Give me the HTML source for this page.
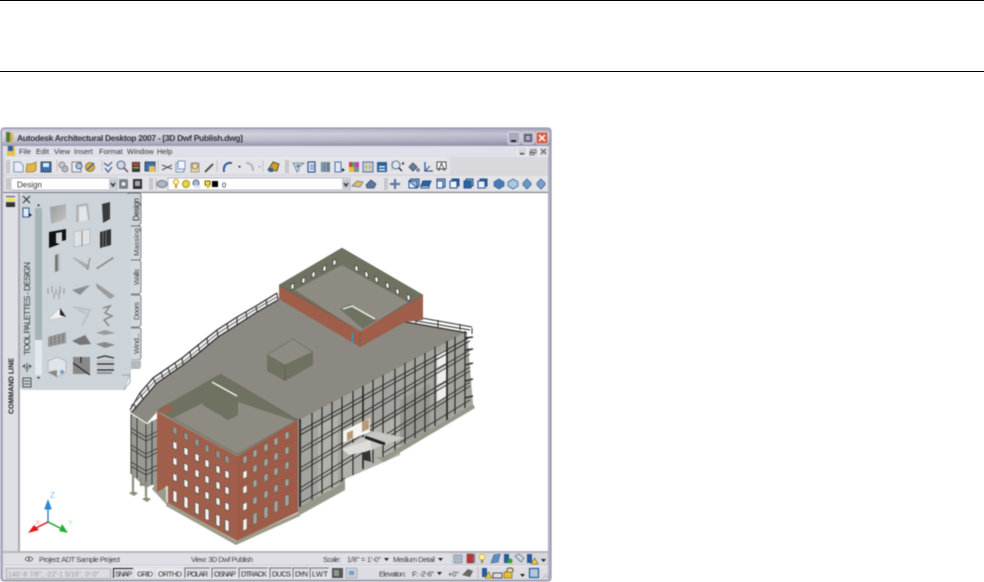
<!DOCTYPE html>
<html><head><meta charset="utf-8"><title>Autodesk Architectural Desktop 2007</title>
<style>
html,body{margin:0;padding:0;background:#fff;width:984px;height:582px;overflow:hidden}
svg{display:block;position:absolute;left:0;top:0}
text{font-family:"Liberation Sans",sans-serif;fill:#333}
.m{font-size:7.5px;fill:#333}
.s{font-size:7.5px;fill:#444}
.b{font-size:7.5px;fill:#333}
.tab{font-size:7.5px;fill:#444}
#win{filter:blur(.4px)}
</style></head><body>
<svg width="984" height="582" viewBox="0 0 984 582" xmlns="http://www.w3.org/2000/svg">
<defs>
<linearGradient id="tb" x1="0" y1="0" x2="0" y2="1"><stop offset="0" stop-color="#b8b8ca"/><stop offset=".3" stop-color="#d6d6e2"/><stop offset=".7" stop-color="#bcbccc"/><stop offset="1" stop-color="#9494ac"/></linearGradient>
<linearGradient id="tbr" x1="0" y1="0" x2="1" y2="0"><stop offset="0" stop-color="#fff" stop-opacity=".15"/><stop offset="1" stop-color="#6a6a8a" stop-opacity=".22"/></linearGradient>
<linearGradient id="w" x1="0" y1="0" x2="1" y2="1"><stop offset="0" stop-color="#9b9b9b"/><stop offset="1" stop-color="#c4c4c4"/></linearGradient>
</defs>
<rect width="984" height="582" fill="#fff"/>
<rect x="0" y="0" width="984" height="1" fill="#000"/>
<rect x="0" y="71" width="984" height="1" fill="#000"/>
<g id="win">
<!-- window frame -->
<rect x="1" y="128" width="550" height="453" rx="3" fill="#b0b0c2" stroke="#8c8ca2" stroke-width="1"/>
<rect x="2" y="129" width="548" height="16" fill="url(#tb)"/>
<rect x="2" y="129" width="548" height="16" fill="url(#tbr)"/>
<rect x="3" y="145" width="545" height="47" fill="#d8d8dd"/>
<rect x="3" y="145" width="545" height="12" fill="#dfe1ea"/>
<rect x="3" y="145" width="545" height="1" fill="#9a9ab0"/>
<rect x="3" y="192" width="545" height="1.4" fill="#77777f"/>

<!-- title -->
<rect x="6" y="132" width="4" height="10" fill="#5a7a3a"/><rect x="10" y="133" width="3" height="9" fill="#d4b048"/>
<text x="17" y="141" font-size="8.5" font-weight="bold" fill="#33333c" style="fill:#33333c" textLength="226" lengthAdjust="spacing">Autodesk Architectural Desktop 2007 - [3D Dwf Publish.dwg]</text>
<!-- window buttons -->
<rect x="508" y="132" width="12" height="12" rx="2" fill="#a9a9c2" stroke="#eee" stroke-width=".8"/><rect x="511" y="140" width="5" height="2" fill="#222"/>
<rect x="522" y="132" width="12" height="12" rx="2" fill="#a9a9c2" stroke="#eee" stroke-width=".8"/><rect x="525" y="135" width="6" height="6" fill="none" stroke="#333" stroke-width="1"/>
<rect x="536" y="132" width="12" height="12" rx="2" fill="#cf6148" stroke="#eee" stroke-width=".8"/><path d="M539 135l6 6M545 135l-6 6" stroke="#fff" stroke-width="1.5"/>

<!-- menu -->
<rect x="7" y="146" width="8" height="10" fill="#e8c050"/><rect x="8" y="146" width="5" height="5" fill="#2b5fa5"/>
<text class="m" x="19" y="154">File</text><text class="m" x="36" y="154">Edit</text><text class="m" x="54" y="154">View</text><text class="m" x="74" y="154">Insert</text><text class="m" x="99" y="154">Format</text><text class="m" x="127" y="154">Window</text><text class="m" x="157" y="154">Help</text>
<g fill="#d5d6dc" stroke="#f2f2f5" stroke-width=".7"><rect x="518" y="147" width="9" height="9"/><rect x="528" y="147" width="10" height="9"/><rect x="539" y="147" width="9" height="9"/></g>
<rect x="520" y="153" width="4" height="1.4" fill="#444"/><path d="M531 150h5v3h-5zM530 152h4v3h-4z" fill="#ddd" stroke="#555" stroke-width=".7"/><path d="M541 149l5 5M546 149l-5 5" stroke="#555" stroke-width="1"/>

<!-- toolbars -->
<rect x="5" y="158" width="445" height="16" fill="#e4e4e8"/>
<rect x="5" y="157.500" width="440" height=".6" fill="#f5f5f7"/>
<rect x="5" y="176" width="543" height="15" fill="#e4e4e8"/>
<path d="M7 160v13M9 160v13M7 178v12M9 178v12M150 178v12M152 178v12M286 160v13M288 160v13M385 178v12M387 178v12" stroke="#aaaab0" stroke-width="1"/>
<path d="M57 160v12M102 160v12M158 160v12M217 160v12M263 160v12M392 160v12M487 179v10M156 178v12" stroke="#bbb" stroke-width=".8"/>
<!-- row 1 icons -->
<g stroke-width=".8">
<path d="M14 162h6l3 3v7h-9z" fill="#e8eef8" stroke="#5a7fb0"/>
<path d="M27 164h5l4-2v8l-3 2h-7z" fill="#e0b850" stroke="#a07820"/>
<rect x="41" y="162" width="10" height="10" fill="#3d70b0" stroke="#234"/><rect x="43" y="163" width="6" height="4" fill="#dfe8f5"/>
<circle cx="62" cy="165" r="3" fill="#c8c8d0" stroke="#777"/><circle cx="65" cy="169" r="3" fill="#b8b8c0" stroke="#777"/>
<rect x="72" y="162" width="9" height="10" fill="#e8e8f0" stroke="#667"/><circle cx="79" cy="166" r="3" fill="#a8c8e8" stroke="#345"/>
<circle cx="90" cy="167" r="4.500" fill="#d8b040" stroke="#806018"/><path d="M87 170l7-7" stroke="#3a6aa0" stroke-width="1.500"/>
<path d="M104 163l4 3 4-4M105 168l3 4 4-5" fill="none" stroke="#3a5a98" stroke-width="1.200"/>
<circle cx="121" cy="165" r="4" fill="#c8d8e8" stroke="#446"/><path d="M124 168l4 4" stroke="#555" stroke-width="1.500"/>
<rect x="132" y="162" width="8" height="10" fill="#383838"/><rect x="133" y="163" width="6" height="3" fill="#c04040"/><rect x="133" y="167" width="6" height="1.500" fill="#80b060"/>
<rect x="145" y="162" width="10" height="9" fill="#3d70b0" stroke="#234"/><rect x="149" y="166" width="6" height="6" fill="#e0c060"/>
<path d="M162 165l10 4M162 170l10-5" stroke="#555" stroke-width="1.200"/>
<rect x="176" y="163" width="8" height="9" fill="#e8eef8" stroke="#5a7fb0"/><rect x="178" y="161" width="7" height="8" fill="#f4f6fa" stroke="#5a7fb0"/>
<rect x="191" y="163" width="8" height="9" fill="#f0d890" stroke="#7a8a9a"/><circle cx="195" cy="166" r="3" fill="none" stroke="#668"/>
<path d="M205 172l8-8" stroke="#555" stroke-width="2"/>
<path d="M232 163c-6-1-9 3-8 9" fill="none" stroke="#2a5a9a" stroke-width="2"/><path d="M238 166l3 0-1.500 2z" fill="#222"/>
<path d="M246 163c5 0 7 3 7 8" fill="none" stroke="#b0b4b8" stroke-width="2"/><path d="M258 166l3 0-1.500 2z" fill="#aaa"/>
<path d="M268 170l5-8 6 2-2 7z" fill="#c8a030" stroke="#403818"/><rect x="269" y="168" width="4" height="4" fill="#3060a0"/>
<path d="M293 163h11l-5 4v3l-2 2-1-3z" fill="#c8d4e0" stroke="#667a8a"/><circle cx="298" cy="166" r="1.500" fill="#6080a0"/>
<rect x="308" y="162" width="7" height="10" fill="#e8eef8" stroke="#2a5090" stroke-width="1.200"/><path d="M310 165h4M310 167h4M310 169h4" stroke="#2a5090"/>
<rect x="321" y="162" width="9" height="10" fill="#6a7f92"/><path d="M323 162v10M326 162v10" stroke="#c0ccd8" stroke-width=".6"/>
<rect x="335" y="162" width="6" height="10" fill="#dfe8f5" stroke="#2a5090"/><path d="M342 168l3 2-3 2z" fill="#222"/>
<rect x="349" y="162" width="3" height="5" fill="#d04040"/><rect x="352" y="162" width="3" height="5" fill="#60a050"/><rect x="355" y="162" width="4" height="5" fill="#c040c0"/><rect x="349" y="167" width="5" height="5" fill="#e0c040"/><rect x="354" y="167" width="5" height="5" fill="#889"/>
<rect x="363" y="162" width="10" height="10" fill="#c8d8e8" stroke="#2a5090"/><path d="M366 162v10M370 162v10M363 167h10" stroke="#d0a040"/>
<rect x="377" y="162" width="10" height="10" fill="#2a6098"/><rect x="379" y="166" width="6" height="1.500" fill="#e8eef8"/><rect x="379" y="169" width="6" height="1.500" fill="#e8eef8"/>
<circle cx="396" cy="165" r="4" fill="#dfe8f0" stroke="#456"/><path d="M399 168l3 3" stroke="#222" stroke-width="1.300"/><path d="M403 162v3M401.500 163.500h3" stroke="#222"/>
<path d="M413 163l4 4-4 4-4-4z" fill="#6a8098" stroke="#345"/><circle cx="418" cy="170" r="2" fill="#789"/>
<path d="M425 162v9h8" fill="none" stroke="#2a5a9a" stroke-width="1.300"/><path d="M425 171l5-5" stroke="#222"/>
<rect x="437" y="162" width="9" height="7" fill="#fff" stroke="#222"/><path d="M441.500 163l-3 8M441.500 163l3 8" stroke="#222" stroke-width=".8"/>
</g>
<!-- combos -->
<rect x="11" y="178" width="106" height="12" fill="#fff" stroke="#a8a8b4" stroke-width=".8"/>
<text x="17" y="187.500" font-size="8" fill="#333" style="fill:#333">Design</text>
<rect x="109" y="179" width="8" height="10" fill="#c4c8d4"/><path d="M111 183l2 3 2-3" fill="none" stroke="#222" stroke-width="1.200"/>
<rect x="119" y="179" width="9" height="10" fill="#8090a0"/><circle cx="123.500" cy="184" r="3" fill="#e0e0e8" stroke="#555"/>
<rect x="133" y="179" width="9" height="10" fill="#303038"/><rect x="135" y="181" width="5" height="5" fill="#aaa"/>
<ellipse cx="162" cy="184" rx="5" ry="3.500" fill="#a8b8c8" stroke="#778"/>
<rect x="168" y="178" width="182" height="12" fill="#fff" stroke="#a8a8b4" stroke-width=".8"/>
<rect x="342" y="179" width="8" height="10" fill="#c4c8d4"/><path d="M344 183l2 3 2-3" fill="none" stroke="#222" stroke-width="1.200"/>
<circle cx="176" cy="182" r="2.500" fill="#fff8b0" stroke="#c0a020"/><rect x="175" y="185" width="2" height="3" fill="#b09030"/>
<circle cx="186" cy="184" r="3.500" fill="#e8d840" stroke="#a09020"/>
<circle cx="196" cy="183" r="3" fill="#a0c0d8" stroke="#567"/><rect x="194" y="185" width="6" height="3" fill="#dde"/>
<path d="M205 181h5v4h-5z" fill="#f0e060" stroke="#806000"/><circle cx="208" cy="186" r="2" fill="#d8c030"/>
<rect x="212" y="181" width="6" height="6" fill="#000"/>
<text x="222" y="187.500" font-size="7.500" fill="#222" style="fill:#222">0</text>
<path d="M352 186l5-5 6 1-3 5z" fill="#e0c050" stroke="#5070a0" stroke-width=".7"/>
<path d="M366 185l5-5 5 4-2 4h-7z" fill="#5a78a0" stroke="#345" stroke-width=".7"/>
<path d="M395 179v10M390 184h10" stroke="#5a78a0" stroke-width="2.200"/>
<g fill="#f0f4f8" stroke="#1f4f8c" stroke-width="1">
<path d="M409 181h8v7h-8z"/><path d="M409 181l2-2h8v7l-2 2z" fill="#2a62a0" fill-opacity=".35"/>
<path d="M423 181h8l-2 5h-8z" fill="#2a62a0"/><path d="M421 186h8v2h-8z"/>
<path d="M437 179h8v8h-8z" fill="#aac0da"/><path d="M437 181h6v7h-6z"/>
<path d="M450 181h7v7h-7z"/><path d="M452 179h7v7h-2v-5h-5z" fill="#2a62a0"/>
<path d="M464 181h7v7h-7z" fill="#2a62a0"/><path d="M466 179h7v7h-2v-5h-5z" fill="#8fb0d0"/>
<path d="M478 181h7v7h-7z" fill="#eef"/><path d="M480 179h7v7h-2v-5h-5z" fill="#2a62a0"/>
</g>
<g stroke="#3a6aa0" stroke-width=".8"><path d="M499 179l5 3v4l-5 3-5-3v-4z" fill="#4a7ab0"/><path d="M513 179l5 3v4l-5 3-5-3v-4z" fill="#a8c8e0"/><path d="M527 179l4 4v2l-4 4-4-4v-2z" fill="#6a98c0"/><path d="M541 179l4 4v2l-4 4-4-4v-2z" fill="#7aa0c8"/></g>

<!-- left strip -->
<rect x="3" y="193" width="16" height="359" fill="#dfdfe6"/>
<rect x="18" y="193" width="2" height="359" fill="#a8a8ae"/>
<rect x="6" y="196" width="9" height="11" fill="#3a5a98"/><rect x="6" y="197" width="9" height="5" fill="#f0e070"/><rect x="6" y="203" width="9" height="4" fill="#333"/>
<text transform="translate(13.500 414) rotate(-90)" font-size="7" font-weight="bold" fill="#222" style="fill:#222" textLength="56">COMMAND LINE</text>

<!-- canvas -->
<rect x="20" y="193" width="528" height="358" fill="#fff"/>

<!-- BUILDING -->
<!-- left lower curved facade -->
<path d="M131 414L147 424 158 418V482L146 488 131 474z" fill="#9a9a94"/>
<path d="M131 428L146 437 158 431M131 432L146 441 158 435M131 445L146 454 158 448M131 449L146 458 158 452M131 462L146 471 158 465M131 466L146 475 158 469" fill="none" stroke="#3c3c3a" stroke-width=".9"/>
<path d="M131 414V474M137 418V478M146 424V488M152 421V485" stroke="#3c3c3a" stroke-width="1"/>
<path d="M133 475V491M146 482V497M141 478V486" stroke="#8b8d7c" stroke-width="2.200"/>
<path d="M129 493l4-2 5 2-4 3zM142 499l4-2 5 2-4 3zM139 484l3-1 4 1-3 2zM153 484l4-1 2 3-3 2z" fill="#8b8d7c"/>
<path d="M152 489L167 505 167 490 157 481z" fill="#9b9c8a"/>
<!-- main roof -->
<path d="M130 412L145 396 157 383 183 363 200 351 218 336 237 324 257 311 279 298 360 345 405 321 467 332 298 421 237 456 157 412 147 423z" fill="#8b8981"/>
<!-- railing -->
<path d="M132 411L145 396 157 383 183 365 200 352 218 337 237 325 257 312 278 300L277 293 256 306 237 317 217 330 198 345 182 358 153 378 140 393 130 410z" fill="#f2f2f2"/>
<path d="M130 410L140 393 153 378 182 358 198 345 217 330 237 317 256 306 277 293" fill="none" stroke="#2c2c2c" stroke-width="1.200"/>
<path d="M132 412L145 397 157 383 183 365 200 352 218 337 237 325 257 312 278 300" fill="none" stroke="#2c2c2c" stroke-width="1.200"/>
<path d="M131 406L143 394 155 381 183 362 199 349 217 334 237 321 256 309 277 297" fill="none" stroke="#555" stroke-width=".8"/>
<path d="M134 404l2 5M140 393l3 6M147 385l2 6M153 378l3 6M161 372l2 6M168 368l2 6M175 363l2 6M182 358l1 7M190 352l1 6M198 345l2 7M207 338l1 7M217 330l1 7M227 323l1 7M237 317v8M246 312l1 7M256 306l1 6M266 299l1 7M277 293l1 7" stroke="#2c2c2c" stroke-width="1"/>
<!-- middle roof box -->
<path d="M267 355V371L285 381 313 365V352L285 365z" fill="#6f7161"/>
<path d="M267 355L293 339 313 352 285 365z" fill="#8d8b82" stroke="#6a6b5c" stroke-width=".6"/>
<path d="M285 365V381" stroke="#5f6053"/>
<!-- curtain wall right -->
<path d="M298 421L467 332 473 404 383 457 377 453 345 478 345 484 298 508z" fill="#a4a49e"/>
<path d="M318 425L338 414V494L318 500zM343 445L400 415V455L343 480z" fill="#b2b2ac"/>
<path d="M400 400L430 384V430L400 445z" fill="#989892"/>
<path d="M437 354l9-5v14l-9 5zM437 371l9-5v14l-9 5zM437 388l9-5v14l-9 5z" fill="#eeeeea"/>
<path d="M298 508L345 482 345 490 298 516zM383 457L473 404 475 408 384 462 376 457z" fill="#96978a"/>
<!-- floors -->
<g fill="none" stroke="#333" stroke-width="1">
<path d="M300 431L470 337M300 435L470 341"/>
<path d="M300 449L470 350M300 453L470 354"/>
<path d="M300 468L470 367M300 472L470 371"/>
<path d="M300 488L470 382M300 492L470 386"/>
<path d="M300 503L345 478M383 453L470 400"/>
</g>
<g stroke="#2a2a2a" stroke-width="1.200">
<path d="M300 419V507M312 413V500M322 407V494M332 402V488M342 397V482M353 391V475M363 386V469M373 380V463M383 375V457M395 369V450M405 363V444M415 358V438M425 353V432M435 347V426M447 341V419M455 337V414M465 331V408"/>
</g>
<path d="M300 419V507" stroke="#2e2e2e" stroke-width="2"/>
<path d="M363 386V469M447 341V420" stroke="#222" stroke-width="1.500"/>
<!-- entry -->
<path d="M343 431L370 418V432L343 443z" fill="#f4f4f0"/><path d="M347 433l6-3v8l-6 3zM362 422l7-3v10l-7 3z" fill="#b89a78"/>
<path d="M342 449L374 431 405 438 378 447 370 451 349 455z" fill="#c8c8c4"/>
<path d="M342 449L370 440 372 450 349 455z" fill="#dcdcd8"/>
<path d="M365 437L385 444" stroke="#222" stroke-width="3"/>
<path d="M363 453l7-3 1 12-3-1-5-1z" fill="#333"/>
<!-- right rail -->
<path d="M405 315L472 327M405 322L467 333M405 319L470 330M405 313v9M416 316v7M438 320v7M460 324v6M472 328v6" fill="none" stroke="#2c2c2c" stroke-width="1"/>
<path d="M465 338l8-1M465 350l8-1M465 365l8-2M465 381l8-2M465 398l8-2" stroke="#2c2c2c" stroke-width="1.600"/>

<!-- penthouse -->
<path d="M279 285L360 331 423 295V320L405 322 360 347 279 299z" fill="#9e5e4a"/>
<path d="M279 285L342 248 423 295 360 331z" fill="#6f7161" stroke="#5c5d50" stroke-width=".5"/>
<path d="M295 290L342 265 408 302 360 332z" fill="#8d8b82"/>
<path d="M279 285L360 331V347" fill="none" stroke="#5c5d50" stroke-width=".5"/>
<path fill="#fff" stroke="#3e3e3a" stroke-width=".7" d="M291 285l3-2v5l-3 2zM302 279l3-2v5l-3 2zM312 273l3-2v5l-3 2zM323 267l3-2v5l-3 2zM333 261l3-2v5l-3 2zM355 265l3 2v5l-3-2zM365 271l3 2v5l-3-2zM375 276l3 2v5l-3-2zM386 282l3 2v5l-3-2zM396 288l3 2v5l-3-2zM407 294l3 2v5l-3-2z"/>
<path d="M340 309L350 304 377 320 363 329z" fill="#6f7161"/>
<path d="M343 309L352 306 375 319" fill="none" stroke="#f4f4f2" stroke-width="1.400"/>
<path d="M352.500 333V343" stroke="#22a0d0" stroke-width="1.300"/>

<!-- front block -->
<path d="M157 412L237 456V541L168 503V486L157 492z" fill="#a05f4b"/>
<path d="M237 456L298 420V512L237 541z" fill="#9e5c48"/>
<path d="M157 410L220 374 298 420 237 455z" fill="#6f7161"/>
<path d="M173 418L203 403 228 420 238 415 238 402 295 421 237 454z" fill="#8d8b82"/>
<path d="M203 386L238 403V415L228 420 203 405z" fill="#6f7161"/>
<path d="M212 382L237 396" stroke="#f4f4f2" stroke-width="1.500"/>
<path d="M157 412l13-7 5 3-8 4 3 2z" fill="#a05f4b"/>
<path d="M220 374L298 420" stroke="#5c5d50" stroke-width=".5"/>
<path d="M167 502L236 541 300 512 300 516 236 545 166 506z" fill="#9b9c8a"/>
<path d="M166 486h2v16h-2z" fill="#d8d8d2"/>
<!-- windows left face -->
<path fill="#93958f" stroke="#5a5048" stroke-width=".5" d="M173 426l4 2v7l-4-2zM184 432l4 2v7l-4-2zM195 438l4 2v7l-4-2zM205 444l4 2v7l-4-2zM216 450l4 2v7l-4-2zM225 455l4 2v7l-4-2z"/>
<path fill="#f2f2f0" stroke="#4a4440" stroke-width=".6" d="M173 441l4 2v7l-4-2zM184 447l4 2v7l-4-2zM195 453l4 2v7l-4-2zM205 459l4 2v7l-4-2zM216 465l4 2v7l-4-2zM225 470l4 2v7l-4-2zM173 457l4 2v7l-4-2zM184 463l4 2v7l-4-2zM195 469l4 2v7l-4-2zM205 475l4 2v7l-4-2zM216 481l4 2v7l-4-2zM225 486l4 2v7l-4-2zM173 473l4 2v7l-4-2zM184 479l4 2v7l-4-2zM195 485l4 2v7l-4-2zM205 491l4 2v7l-4-2zM216 497l4 2v7l-4-2zM225 502l4 2v7l-4-2zM173 490l4 2v11l-4-2zM184 496l4 2v11l-4-2zM195 502l4 2v11l-4-2zM205 508l4 2v11l-4-2zM216 514l4 2v11l-4-2zM225 519l4 2v11l-4-2z"/>
<!-- windows right face -->
<path fill="#a2a49e" stroke="#5a5048" stroke-width=".5" d="M243 457l4-2v7l-4 2zM253 451l4-2v7l-4 2zM264 445l4-2v7l-4 2zM274 439l4-2v7l-4 2zM285 433l4-2v7l-4 2zM253 466l4-2v7l-4 2zM264 460l4-2v7l-4 2zM274 454l4-2v7l-4 2zM285 448l4-2v7l-4 2zM253 481l4-2v7l-4 2zM264 475l4-2v7l-4 2zM274 469l4-2v7l-4 2zM285 463l4-2v7l-4 2zM253 498l4-2v7l-4 2zM264 492l4-2v7l-4 2zM274 486l4-2v7l-4 2zM285 480l4-2v7l-4 2zM253 514l4-2v11l-4 2zM264 508l4-2v11l-4 2zM274 502l4-2v11l-4 2zM285 496l4-2v11l-4 2z"/>
<path fill="#f2f2f0" stroke="#5a5048" stroke-width=".5" d="M243 472l4-2v7l-4 2zM243 487l4-2v7l-4 2zM243 504l4-2v7l-4 2zM243 520l4-2v11l-4 2z"/>

<!-- UCS -->
<path d="M48 522V505" stroke="#1f74c0" stroke-width="1.300"/><path d="M48 499l3.800 10.500h-7.600z" fill="#2a86d8"/>
<path d="M48 522L36 528" stroke="#d01818" stroke-width="1.500"/><path d="M28 533l6-8 5 5z" fill="#e01818"/>
<path d="M48 522L60 528" stroke="#18a028" stroke-width="1.500"/><path d="M68 533l-9-2 3-7z" fill="#20b030"/>
<text x="50" y="498" font-size="8" fill="#7ac0f0" style="fill:#7ac0f0">Z</text>
<text x="35" y="525" font-size="7.500" fill="#f0a0a0" style="fill:#f0a0a0">X</text>
<text x="68" y="525" font-size="7.500" fill="#a0e890" style="fill:#a0e890">Y</text>

<!-- PALETTE -->
<path d="M20 197q0-4 4-4H130V375L124 390H24q-4 0-4-4z" fill="#ccd3d9"/>
<path d="M124 390L130 375H122" fill="none" stroke="#8a8f94" stroke-width=".8"/>
<path d="M130 375V390H124z" fill="#fff"/>
<path d="M124 390L130 382V362" fill="none" stroke="#9aa0a5" stroke-width="1"/>
<!-- tabs -->
<g fill="#d3d8dd" stroke="#5a5e62" stroke-width=".7">
<path d="M130 226H139q2 0 2 2V258l-2 2H130"/>
<path d="M130 260H139q2 0 2 2V292l-2 2H130"/>
<path d="M130 295H139q2 0 2 2V325l-2 2H130"/>
<path d="M130 328H139q2 0 2 2V358l-2 2H130"/>
</g>
<path d="M130 360h11v8l-2 1h-9z" fill="#d3d8dd"/><path d="M130 362h11M130 364h11M130 366h11M130 368h10" stroke="#55595d" stroke-width=".6"/>
<path d="M128 193H139q2 0 2 3V223l-2 3H130z" fill="#ccd3d9" stroke="#555" stroke-width=".7"/>
<rect x="126" y="194" width="5" height="180" fill="#ccd3d9"/>
<text transform="translate(139 221) rotate(-90)" font-size="8" fill="#222" style="fill:#222" textLength="23">Design</text>
<text class="tab" transform="translate(139 256) rotate(-90)" textLength="28">Massing</text>
<text class="tab" transform="translate(139 285) rotate(-90)" textLength="16">Walls</text>
<text class="tab" transform="translate(139 320) rotate(-90)" textLength="18">Doors</text>
<text class="tab" transform="translate(139 354) rotate(-90)" textLength="21">Wind...</text>
<!-- palette left col -->
<path d="M23 196l7 7M30 196l-7 7" stroke="#333" stroke-width="1.100"/>
<rect x="23" y="208" width="6" height="9" fill="#e0ecf8" stroke="#2a5a9a" stroke-width="1"/><path d="M29 213l3 2-3 2z" fill="#222"/>
<text transform="translate(30 355) rotate(-90)" font-size="8.500" fill="#333" style="fill:#333" textLength="93">TOOL PALETTES - DESIGN</text>
<path d="M27 363v9" stroke="#333" stroke-width=".8"/><path d="M26 367l-4 0 0 0 3-3v6zM28 367l4 0-3-3v6z" fill="#333"/>
<rect x="23" y="378" width="8" height="9" fill="#ccd3d9" stroke="#333" stroke-width=".8"/><path d="M24 381h6M24 384h6" stroke="#333" stroke-width=".7"/>
<!-- scrollbar -->
<rect x="35" y="202" width="7" height="138" fill="#a6b2ba"/>
<rect x="35" y="340" width="7" height="36" fill="#e2e9f0"/>
<rect x="35" y="202" width="7" height="6" fill="#ccd3d9"/><rect x="35" y="375" width="7" height="6" fill="#ccd3d9"/>
<path d="M37 206l1.500-2 1.500 2z M37 377l1.500 2 1.500-2z" fill="#222"/>
<!-- thumbs -->
<path d="M50 207L66 204V219L51 224z" fill="url(#w)"/>
<path d="M76 205L88 203 90 220H88L86 206 79 207V222H76z" fill="#b4b4b4"/><path d="M79 207L86 206 88 220 79 222z" fill="#e2e6e8"/>
<path d="M102 204L110 202V219L103 223z" fill="#3c3c3c"/>
<path d="M49 232L66 229V240L62 241V232L56 233V243L60 244 49 248z" fill="#111"/>
<path d="M74 232L90 229V244L74 247z" fill="#dfe2e4" stroke="#aaa" stroke-width=".6"/><path d="M82 231V246" stroke="#888"/>
<path d="M100 232L111 229V245L100 248z" fill="#333"/><path d="M103 231v16M106 230v16" stroke="#888" stroke-width=".7"/>
<path d="M55 255l3-1v17l-3 1z" fill="#777"/><path d="M58 254h2v17h-2z" fill="#c0c0c0"/>
<path d="M73 257L90 266 88 270 73 258z" fill="#a8a8a8"/><path d="M90 258L87 270" stroke="#999" stroke-width="1.500"/>
<path d="M96 268L113 257 114 259 98 270z" fill="#8a8a8a"/><path d="M97 270L114 259" stroke="#ddd"/>
<path d="M48 288v6M52 286v7M56 289v6M60 286v7M64 288v6M54 293v6M59 292v7" stroke="#999" stroke-width="1"/>
<path d="M72 290L90 285 80 295z" fill="#8e8e8e"/><path d="M96 283L115 296 110 299 97 288z" fill="#9c9c9c"/>
<path d="M48 320L60 308 66 317z" fill="#f0f0f0" stroke="#bbb" stroke-width=".5"/><path d="M60 308L66 317 60 315z" fill="#222"/>
<path d="M73 307L90 310 84 322 82 325M78 310L86 313" fill="none" stroke="#bbb" stroke-width="1.500"/>
<path d="M103 308L110 306 105 313 112 316 104 320 109 326" fill="none" stroke="#888" stroke-width="1.500"/>
<path d="M48 337L66 332V343L48 347z" fill="#999"/><path d="M51 336v10M55 335v10M59 334v10M63 333v10" stroke="#666" stroke-width=".6"/>
<path d="M72 341L85 335 91 344 80 345z" fill="#777"/>
<path d="M96 333L105 330 115 333 105 335z" fill="#9a9a9a"/><path d="M96 344L105 342 115 345 105 348z" fill="#888"/>
<path d="M48 361L57 357 66 361V372L57 377 48 372z" fill="#dfe4e8" stroke="#aaa" stroke-width=".7"/><circle cx="62" cy="372" r="2" fill="#70a0d0"/><path d="M48 372L57 377 57 370z" fill="#888"/>
<rect x="73" y="357" width="17" height="17" fill="#888"/><path d="M81 357v6M73 363l17 12" stroke="#111" stroke-width="1"/>
<g stroke-width="1.400"><path d="M97 358l8-2 9 2" fill="none" stroke="#333"/><path d="M97 361h17" stroke="#bbb"/><path d="M97 364h17" stroke="#333"/><path d="M97 367h17" stroke="#bbb"/><path d="M97 370h17" stroke="#333"/><path d="M97 373h15" stroke="#777"/></g>

<!-- status 1 -->
<rect x="3" y="551" width="545" height="2" fill="#b5b5bb"/>
<rect x="3" y="553" width="545" height="12" fill="#dfdfe6"/>
<ellipse cx="29" cy="559" rx="3.500" ry="2" fill="#fff" stroke="#333" stroke-width=".8"/><circle cx="29" cy="559" r="1" fill="#333"/>
<text class="s" x="39" y="562" textLength="81">Project: ADT Sample Project</text>
<text class="s" x="191" y="562" textLength="62">View: 3D Dwf Publish</text>
<text class="s" x="323" y="562" textLength="18">Scale:</text>
<text class="s" x="347" y="562" textLength="34">1/8" = 1'-0"</text>
<path d="M384 558h5l-2.500 3z" fill="#222"/>
<text class="s" x="393" y="562" textLength="42">Medium Detail</text>
<path d="M438 558h5l-2.500 3z" fill="#222"/>
<rect x="451" y="553" width="97" height="12" fill="#d6d6dc"/>
<g stroke-width=".6">
<rect x="454" y="555" width="8" height="8" fill="#a8b8c8" stroke="#789"/>
<rect x="467" y="554" width="6" height="9" fill="#c83030" stroke="#555"/><rect x="473" y="554" width="2" height="9" fill="#777"/>
<circle cx="482" cy="557" r="2.800" fill="#fff8a0" stroke="#c0a020"/><rect x="481" y="560" width="2" height="3" fill="#a08030"/>
<path d="M491 563l3-8 6-1-2 8z" fill="#5a90c8" stroke="#357"/>
<rect x="504" y="554" width="5" height="9" fill="#2a5a9a"/><circle cx="510" cy="561" r="2.500" fill="#30a030"/>
<path d="M515 556l4-2 5 4-3 4z" fill="#c8d8e8" stroke="#456"/>
<rect x="527" y="554" width="5" height="9" fill="#2a5a9a"/><path d="M531 564l3.500-6 3.500 6z" fill="#f0d020" stroke="#555"/>
<path d="M541 559h5l-2.500 3z" fill="#222"/>
</g>

<!-- status 2 -->
<rect x="3" y="565.500" width="545" height="1" fill="#f2f2f5"/>
<rect x="3" y="566.500" width="545" height="13" fill="#dcdce2"/>
<rect x="6.500" y="568.500" width="104" height="10" fill="#dcdce2" stroke="#aaa" stroke-width=".8"/>
<text x="8" y="576.500" font-size="7" fill="#9a9a9e" style="fill:#9a9a9e" textLength="91">140'-8 7/8", -22'-1 5/16", 0'-0"</text>
<g fill="#dcdce2" stroke="#55555c" stroke-width=".8">
<path d="M113.500 578V568.500H133" fill="none" stroke="#222" stroke-width="1"/>
<path d="M185 578V568H210M212 578V568H237M239 578V568H268M270 578V568H292M293 578V568H309M310 578V568H329" fill="none"/>
</g>
<path d="M210 568V578H185M237 568V578H212M268 568V578H239M292 568V578H270M309 568V578H293M329 568V578H310" fill="none" stroke="#f2f2f5" stroke-width=".7"/>
<rect x="135" y="568" width="19" height="10" fill="#e8e8ec"/><rect x="156" y="568" width="27" height="10" fill="#e8e8ec"/>
<text class="b" x="115" y="576.500" textLength="17">SNAP</text>
<text class="b" x="137" y="576.500" textLength="16">GRID</text>
<text class="b" x="158" y="576.500" textLength="24">ORTHD</text>
<text class="b" x="187" y="576.500" textLength="21">POLAR</text>
<text class="b" x="214" y="576.500" textLength="22">OSNAP</text>
<text class="b" x="241" y="576.500" textLength="26">DTRACK</text>
<text class="b" x="272" y="576.500" textLength="19">DUCS</text>
<text class="b" x="295" y="576.500" textLength="13">DYN</text>
<text class="b" x="312" y="576.500" textLength="16">LWT</text>
<rect x="332" y="568" width="11" height="10" fill="#55555a"/><rect x="334" y="570" width="5" height="6" fill="#8a9a8a"/>
<rect x="346" y="568" width="11" height="10" fill="#c8d0d8" stroke="#99a" stroke-width=".6"/><rect x="349" y="571" width="5" height="4" fill="#7a9ac0"/>
<text class="s" x="379" y="576.500" textLength="27">Elevation:</text>
<text class="s" x="412" y="576.500" textLength="22">F: -2'-6"</text>
<path d="M437 572h5l-2.500 3z" fill="#222"/>
<text class="s" x="448" y="576.500" textLength="11">+0"</text>
<path d="M462 575l6-6 5 2-3 6z" fill="#666"/>
<path d="M478 567v12" stroke="#bbb"/>
<rect x="482" y="568" width="5" height="9" fill="#2a5a9a"/><path d="M485 578l3.500-6 3.500 6z" fill="#f0d020" stroke="#555" stroke-width=".6"/>
<rect x="493" y="573" width="9" height="5" fill="#dcdce2" stroke="#333" stroke-width=".8"/>
<rect x="504" y="572" width="8" height="6" fill="#e8c030" stroke="#665010" stroke-width=".6"/><path d="M507 572v-2q0-2 3-2t3 2v2" fill="none" stroke="#665010" stroke-width="1"/>
<path d="M520 574h5l-2.500 3z" fill="#222"/>
<rect x="529.500" y="568.500" width="9" height="9" fill="#b4c8dc" stroke="#2a5a9a" stroke-width="1.200"/>
<path d="M543 578l4-4M546 578l2-2" stroke="#aaa" stroke-width=".8"/>
</g>
</svg>
</body></html>
